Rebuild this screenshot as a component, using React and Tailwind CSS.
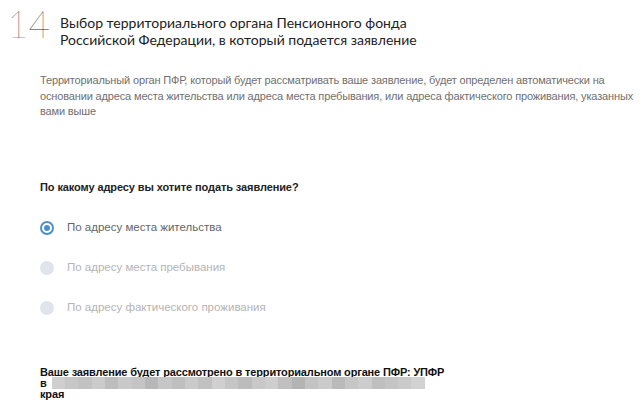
import { useState } from 'react';

const OPTIONS = [
  { id: 'live', label: 'По адресу места жительства', disabled: false },
  { id: 'stay', label: 'По адресу места пребывания', disabled: true },
  { id: 'fact', label: 'По адресу фактического проживания', disabled: true },
];

// pixelated blur over the hidden part of the address
const BLUR = [
  'bg-[#cfcfcf]', 'bg-[#c7c7c7]', 'bg-[#c2c2c2]', 'bg-[#cbcbcb]', 'bg-[#bdbdbd]',
  'bg-[#c9c9c9]', 'bg-[#c4c4c4]', 'bg-[#b7b7b7]', 'bg-[#c6c6c6]', 'bg-[#bfbfbf]',
  'bg-[#cacaca]', 'bg-[#c1c1c1]', 'bg-[#d0d0d0]', 'bg-[#c5c5c5]', 'bg-[#bcbcbc]',
  'bg-[#c8c8c8]', 'bg-[#cecece]', 'bg-[#c0c0c0]', 'bg-[#b4b4b4]', 'bg-[#c3c3c3]',
  'bg-[#cbcbcb]', 'bg-[#bababa]', 'bg-[#c6c6c6]', 'bg-[#cdcdcd]', 'bg-[#bfbfbf]',
  'bg-[#c4c4c4]', 'bg-[#cacaca]', 'bg-[#d2d2d2]',
];

function Radio({ checked, disabled }) {
  if (disabled) {
    return <span className="block w-[14px] h-[14px] rounded-full bg-[#dfe5ea]" />;
  }
  return (
    <span className="flex items-center justify-center w-[14px] h-[14px] rounded-full border-2 border-[#4a90cf] bg-white">
      {checked && <span className="block w-[6px] h-[6px] rounded-full bg-[#4a90cf]" />}
    </span>
  );
}

export default function App() {
  const [value, setValue] = useState('live');

  return (
    <div className="w-[640px] h-[415px] overflow-hidden bg-white font-['Liberation_Sans',Arial,sans-serif]">
      <div className="flex items-start pt-[6px] pl-[7px]">
        <div className="w-[53px] text-[37px] leading-[36px] font-thin text-[#1a1a1a] font-['Lato','Noto_Sans',sans-serif]">
          14
        </div>
        <h2 className="pt-[8px] text-[14px] leading-[17px] text-[#222] font-['Lato','Noto_Sans',sans-serif]">
          Выбор территориального органа Пенсионного фонда
          <br />
          Российской Федерации, в который подается заявление
        </h2>
      </div>

      <div className="pl-[40px] pr-[4px]">
        <p className="mt-[25px] text-[11px] leading-[15.5px] tracking-[-0.15px] text-[#707070]">
          Территориальный орган ПФР, который будет рассматривать ваше заявление, будет определен автоматически на
          основании адреса места жительства или адреса места пребывания, или адреса фактического проживания, указанных
          вами выше
        </p>

        <div className="mt-[60px] text-[11px] leading-[14px] font-bold tracking-[-0.1px] text-[#222]">
          По какому адресу вы хотите подать заявление?
        </div>

        <div className="mt-[27px] flex flex-col gap-[26px]">
          {OPTIONS.map((o) => (
            <label
              key={o.id}
              className={`flex items-center gap-[13px] h-[14px] ${o.disabled ? 'cursor-default' : 'cursor-pointer'}`}
              onClick={() => !o.disabled && setValue(o.id)}
            >
              <Radio checked={value === o.id} disabled={o.disabled} />
              <span className={`text-[11.5px] ${o.disabled ? 'text-[#b4b4b4]' : 'text-[#666]'}`}>{o.label}</span>
            </label>
          ))}
        </div>

        <div className="mt-[52px] text-[11px] leading-[10.5px] font-bold tracking-[-0.15px] text-[#111]">
          <div>Ваше заявление будет рассмотрено в территориальном органе ПФР: УПФР</div>
          <div className="flex items-center">
            <span>в</span>
            <span className="ml-[5px] flex w-[373px] h-[12px]">
              {BLUR.map((c, i) => (
                <span key={i} className={`flex-1 ${c}`} />
              ))}
            </span>
          </div>
          <div>края</div>
        </div>
      </div>
    </div>
  );
}
